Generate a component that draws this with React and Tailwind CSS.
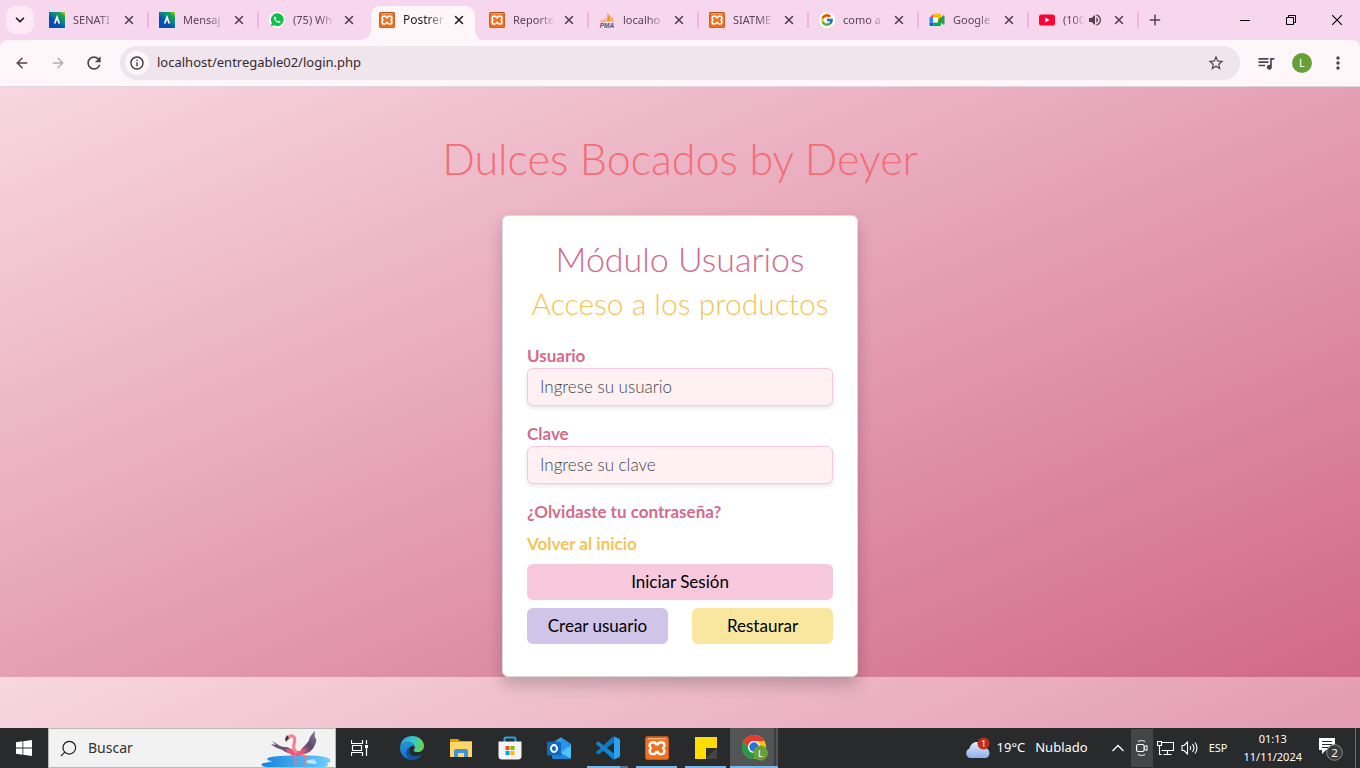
import React from "react";
import { X, Plus, ArrowLeft, ArrowRight, ChevronDown, Search } from "lucide-react";
import { FcGoogle } from "react-icons/fc";
import { MdQueueMusic, MdMoreVert, MdRefresh, MdStarOutline, MdInfoOutline, MdVolumeUp } from "react-icons/md";

function SenatiIcon() {
  return (
    <svg viewBox="0 0 16 16" className="size-4 shrink-0">
      <defs>
        <linearGradient id="senati" x1="1" y1="0" x2="0.15" y2="1">
          <stop offset="0" stopColor="#c5d92b" />
          <stop offset="0.2" stopColor="#1ba548" />
          <stop offset="0.5" stopColor="#0a7a94" />
          <stop offset="0.65" stopColor="#0350b5" />
        </linearGradient>
      </defs>
      <rect width="16" height="16" fill="url(#senati)" />
      <path d="M5.7 11.5 8 5.2l2.3 6.3" fill="none" stroke="#fff" strokeWidth="1.7" />
    </svg>
  );
}

function WhatsAppIcon() {
  return (
    <svg viewBox="0 0 16 16" className="size-4 shrink-0">
      <circle cx="8" cy="8" r="8" fill="#fff" />
      <path d="M1.8 14.3l1-3.4a6.4 6.4 0 1 1 2.5 2.4z" fill="#0fbf45" />
      <path d="M5.7 4.6c-1.3.9-.7 2.5.4 4 1.2 1.5 3 3 4.6 2.3 1-.5 1-1.2.9-1.500l-1.600-.8-.9 1c-1.200-.4-2.100-1.400-2.600-2.300l.6-.9-.7-1.700z" fill="#fff" />
    </svg>
  );
}

function XamppIcon({ className }) {
  return (
    <svg viewBox="0 0 24 24" className={className}>
      <rect x="0" y="0" width="24" height="24" rx="2.5" fill="#b9541a" />
      <rect x="0.8" y="1.6" width="22.4" height="21.6" rx="2" fill="#f0701d" />
      <path d="M3 2.7h18" stroke="#f7b98c" strokeWidth="1.2" />
      <path
        d="M8.2 6.2c-2.2 0-3.600 1.300-3.600 3 0 1.200.5 2.100 1.300 2.900-.8.800-1.300 1.700-1.300 2.900 0 1.800 1.400 3.100 3.500 3.100 1.700 0 2.700-.8 3-2.200h1.800c.3 1.400 1.300 2.200 3 2.200 2.100 0 3.500-1.300 3.500-3.100 0-1.200-.5-2.100-1.300-2.900.8-.8 1.300-1.700 1.300-2.900 0-1.700-1.400-3-3.600-3-1.600 0-2.600.8-2.900 2.200h-1.800c-.3-1.400-1.300-2.200-2.900-2.200z"
        fill="none" stroke="#fff" strokeWidth="2.4" strokeLinejoin="round"
      />
    </svg>
  );
}

function PmaIcon() {
  return (
    <svg viewBox="0 0 16 16" className="size-4 shrink-0">
      <path d="M8 1c3 2 4 5 3.500 8.500H7.200C8.600 7 8.800 4 8 1z" fill="#f89c0e" />
      <path d="M11.300 3.500c2 1.500 3.500 3.500 3.700 6h-3c.3-2 0-4-.7-6z" fill="#f9b04a" />
      <path d="M7 3.500C7 6 5.500 8.500 2.500 10H6c1-2 1.400-4 1-6.500zM3.400 6C3 8 2 9.300.6 10.200h1.800C3.300 9 3.600 7.500 3.400 6z" fill="#f3a83c" />
      <text x="8" y="15.6" textAnchor="middle" fontSize="6.5" fontWeight="900" fontStyle="italic" fill="#4c5579" fontFamily="Liberation Sans, sans-serif">PMA</text>
    </svg>
  );
}

function GoogleIcon() {
  return (
    <span className="flex size-4 shrink-0 items-center justify-center rounded-full bg-white">
      <FcGoogle className="size-3.5" />
    </span>
  );
}

function MeetIcon() {
  return (
    <svg viewBox="0 0 16 16" className="size-4 shrink-0">
      <path d="M4.2 2 .5 5.700h3.700z" fill="#ea4335" />
      <path d="M.5 5.700h3.700v4.700H.5z" fill="#2684fc" />
      <path d="M.5 10.400h3.700V14H1.700c-.7 0-1.200-.5-1.200-1.200z" fill="#0066da" />
      <path d="M4.200 2h6.600c.7 0 1.200.5 1.200 1.200V8l-3-.5V5.700H4.200z" fill="#ffba00" />
      <path d="M4.200 14v-3.600H9V8l3-2.500v7.300c0 .7-.5 1.200-1.200 1.200z" fill="#00ac47" />
      <path d="M4.200 5.700H9v4.700H4.200z" fill="#fff" />
      <path d="M9 8l5.500-4.700c.4-.3 1-.1 1 .4v8.600c0 .5-.6.7-1 .4z" fill="#2f9a48" />
    </svg>
  );
}

function YouTubeIcon() {
  return (
    <svg viewBox="0 0 16 16" className="size-4 shrink-0">
      <rect y="2.5" width="16" height="11" rx="2.6" fill="#ff0033" />
      <path d="M6.300 5.600v4.800L10.500 8z" fill="#fff" />
    </svg>
  );
}

const tabs = [
  { title: "SENATI", icon: <SenatiIcon /> },
  { title: "Mensaj", icon: <SenatiIcon /> },
  { title: "(75) Wh", icon: <WhatsAppIcon /> },
  { title: "Postrerí", icon: <XamppIcon className="size-4 shrink-0" />, active: true },
  { title: "Reporte", icon: <XamppIcon className="size-4 shrink-0" /> },
  { title: "localho", icon: <PmaIcon /> },
  { title: "SIATME", icon: <XamppIcon className="size-4 shrink-0" /> },
  { title: "como a", icon: <GoogleIcon /> },
  { title: "Google", icon: <MeetIcon /> },
  { title: "(100", icon: <YouTubeIcon />, audio: true },
];

function Tab({ tab, separator }) {
  return (
    <div
      className={
        tab.active
          ? "relative z-10 flex h-[34px] w-[110px] items-center self-end pb-1.5"
          : "relative flex h-[34px] w-[110px] items-center self-end pb-1.5"
      }
    >
      {tab.active && (
        <svg viewBox="0 0 124 34" className="absolute -left-2.5 top-0 h-[34px] w-[124px]" aria-hidden="true">
          <path d="M0 34c7 0 12-4 12-11V10C12 4 16 0 22 0h84c6 0 10 4 10 10v13c0 7 4 11 8 11z" fill="#fff6fa" />
        </svg>
      )}
      <div className="relative flex w-full items-center pl-2.5">
        {tab.icon}
        <span
          className={
            tab.audio
              ? "ml-2 w-6 whitespace-nowrap text-[11px] text-[#5a4355] [mask-image:linear-gradient(to_right,black_40%,transparent_90%)]"
              : tab.active
                ? "ml-2 w-[42px] whitespace-nowrap text-[12px] text-[#231c21] [mask-image:linear-gradient(to_right,black_60%,transparent)]"
                : "ml-2 w-[42px] whitespace-nowrap text-[11px] text-[#5a4355] [mask-image:linear-gradient(to_right,black_60%,transparent)]"
          }
        >
          {tab.title}
        </span>
        {tab.audio && <MdVolumeUp className="size-4 text-[#54404f]" />}
        <button
          aria-label={"Cerrar " + tab.title}
          className={tab.active ? "ml-auto mr-[13px] text-[#231c21]" : "ml-auto mr-[13px] text-[#54404f]"}
        >
          <X className="size-3.5" strokeWidth={2.6} />
        </button>
      </div>
      {separator && <span className="absolute bottom-3 right-0 h-4 w-0.5 bg-[#f3b2e8]" />}
    </div>
  );
}

function Browser() {
  return (
    <header className="bg-[#f6d7ee]">
      <div className="flex h-10 items-center">
        <button aria-label="Buscar pestañas" className="ml-1.5 flex size-7 items-center justify-center rounded-[10px] bg-[#fdeaf6] text-[#231c21]">
          <ChevronDown className="size-3.5" strokeWidth={3} />
        </button>
        <div className="ml-1 flex h-10 pl-px">
          {tabs.map((t, i) => (
            <Tab key={i} tab={t} separator={i !== 2 && i !== 3} />
          ))}
        </div>
        <button aria-label="Nueva pestaña" className="ml-2 text-[#54404f]">
          <Plus className="size-4" strokeWidth={2.2} />
        </button>
        <div className="ml-auto flex items-center text-black">
          <button aria-label="Minimizar" className="flex h-10 w-[46px] items-center justify-center">
            <svg viewBox="0 0 10 10" className="size-2.5"><path d="M0 5.500h10" stroke="currentColor" /></svg>
          </button>
          <button aria-label="Restaurar ventana" className="flex h-10 w-[46px] items-center justify-center">
            <svg viewBox="0 0 10 10" className="size-2.5"><path d="M.5 2.500h7v7h-7zM2.500 2.500v-2h7v7h-2" fill="none" stroke="currentColor" /></svg>
          </button>
          <button aria-label="Cerrar ventana" className="flex h-10 w-[46px] items-center justify-center">
            <svg viewBox="0 0 10 10" className="size-2.5"><path d="M0 0l10 10M10 0L0 10" stroke="currentColor" strokeWidth="1.100" /></svg>
          </button>
        </div>
      </div>
      <div className="flex h-[47px] items-center rounded-t-lg border-b border-[#e2d5dd] bg-[#fff6fa] pl-3.5 pr-3 text-[#54404f]">
        <button aria-label="Atrás"><ArrowLeft className="size-4" strokeWidth={2.2} /></button>
        <button aria-label="Adelante" className="ml-5 text-[#b8abb4]"><ArrowRight className="size-4" strokeWidth={2.2} /></button>
        <button aria-label="Recargar" className="ml-[18px]"><MdRefresh className="size-5" /></button>
        <div className="ml-4 flex h-[34px] flex-1 items-center rounded-full bg-[#f0e4ed] pl-[5px] pr-[15px]">
          <button aria-label="Información del sitio" className="flex size-6 shrink-0 items-center justify-center rounded-full bg-[#fff6fa] text-[#3a3037]">
            <MdInfoOutline className="size-4" />
          </button>
          <input
            aria-label="Dirección"
            defaultValue="localhost/entregable02/login.php"
            className="ml-2 min-w-0 flex-1 bg-transparent text-[13px] text-[#33292f] outline-none"
          />
          <button aria-label="Marcar página"><MdStarOutline className="size-[18px]" /></button>
        </div>
        <button aria-label="Cola multimedia" className="ml-4"><MdQueueMusic className="size-5" /></button>
        <button aria-label="Perfil" className="ml-4 flex size-5 items-center justify-center rounded-full bg-[#689f38] text-[11px] text-white">L</button>
        <button aria-label="Menú" className="ml-4"><MdMoreVert className="size-5" /></button>
      </div>
    </header>
  );
}

function Field({ id, label, type, placeholder }) {
  return (
    <div className="mb-4">
      <label htmlFor={id} className="block font-bold leading-6 text-[#d36b8c]">{label}</label>
      <input
        id={id}
        type={type}
        placeholder={placeholder}
        className="block h-[38px] w-full rounded-md border border-[#f8c8dc] bg-[#fff0f3] px-3 pb-0.5 font-light text-gray-700 shadow-[0_2px_4px_rgba(0,0,0,0.1)] outline-none placeholder:text-[#41464b]"
      />
    </div>
  );
}

function Login() {
  return (
    <main className="flex-1 bg-[linear-gradient(to_bottom_right,#f8d7e0,#d16889)] bg-[length:100%_590px] pt-12 font-[Lato,'Noto_Sans',sans-serif] text-[17px]">
      <h1 className="mb-8 text-center text-[43px] font-light leading-[48px] text-[#f46d75]">Dulces Bocados by Deyer</h1>
      <form
        onSubmit={(e) => e.preventDefault()}
        className="mx-auto w-[356px] rounded-md border border-[#dcd9dd] bg-white px-6 pb-8 pt-6 shadow-[0_8px_16px_rgba(0,0,0,0.2)]"
      >
        <h2 className="mb-2 text-center text-[34px] font-light leading-[38px] text-[#d36b8c]">Módulo Usuarios</h2>
        <h3 className="mb-6 whitespace-nowrap text-center text-[30px] font-light leading-[34px] text-[#f2c45a]">Acceso a los productos</h3>
        <Field id="usuario" label="Usuario" type="text" placeholder="Ingrese su usuario" />
        <Field id="clave" label="Clave" type="password" placeholder="Ingrese su clave" />
        <a href="#recuperar" className="mb-2 block font-bold leading-6 text-[#d36b8c]">¿Olvidaste tu contraseña?</a>
        <a href="#inicio" className="mb-2 block font-bold leading-6 text-[#f2c45a]">Volver al inicio</a>
        <button type="submit" className="mb-2 h-9 w-full rounded-md bg-[#f8c8dc] text-black">Iniciar Sesión</button>
        <div className="grid grid-cols-2 gap-6">
          <button type="button" className="h-9 rounded-md bg-[#d0c4e8] text-black">Crear usuario</button>
          <button type="reset" className="h-9 rounded-md bg-[#f9e79f] text-black">Restaurar</button>
        </div>
      </form>
    </main>
  );
}

function Flamingo() {
  return (
    <svg viewBox="0 0 70 38" className="mr-1 h-[38px] w-[70px] shrink-0" aria-hidden="true">
      <defs>
        <linearGradient id="water" x1="0" x2="1"><stop offset="0" stopColor="#1583dc" /><stop offset="1" stopColor="#72cdff" /></linearGradient>
        <linearGradient id="wing" x1="0" y1="1" x2="1" y2="0"><stop offset="0" stopColor="#e85a7d" /><stop offset="0.5" stopColor="#5b4a70" /><stop offset="1" stopColor="#8b7b97" /></linearGradient>
      </defs>
      <path d="M7 29c8-3 50-4 60 0 4 2 3 4-1 5 3 3-2 4-5 4H6c-6 0-7-3-3-4 3-1 8-1 8-2-4 0-6-2-4-3z" fill="url(#water)" />
      <path d="M45 34c0-3 3-4 5-3 1-2 4-1 4 1 2 0 2 3 0 3z" fill="#b6e6ff" />
      <path d="M38 25c2-7 8-9 10-14 1-4 3-6 6-9 0 3-1 5 1 8 1 3-1 5-2 8-3 5-8 8-15 7z" fill="url(#wing)" />
      <path d="M32 24c-7 1-9-3-13-4-3-1-6-2-9-5l5 1-4-4c4 2 8 6 12 6 5 0 8 2 11 5z" fill="#66527a" />
      <path d="M24 20c7 0 10 2 16 2 2-1 4-2 5-2-1 4-5 7-9 7-6 0-9-3-12-7z" fill="#f0567b" />
      <path d="M35 23c-6-5 1-10-2-15-2-2-5-1-6 1" fill="none" stroke="#fb8290" strokeWidth="3.2" strokeLinecap="round" />
      <path d="M26 6l-2 4 1 3 3-4z" fill="#49304b" />
      <path d="M34 26l1 11M40 25l5 3-1 8" fill="none" stroke="#f2766f" strokeWidth="1.7" />
    </svg>
  );
}

const EdgeIcon = () => (
  <svg viewBox="0 0 24 24" className="size-6">
    <defs>
      <linearGradient id="edgeTop" x1="0" y1="0.3" x2="1" y2="0.5"><stop offset="0" stopColor="#2aa5e0" /><stop offset="0.5" stopColor="#33c5cf" /><stop offset="1" stopColor="#66d94b" /></linearGradient>
      <linearGradient id="edgeLow" x1="0" y1="0" x2="0.4" y2="1"><stop offset="0" stopColor="#229be0" /><stop offset="1" stopColor="#1267bd" /></linearGradient>
    </defs>
    <path d="M0.2 10.5C1 4 6 0 12 0c7 0 12 4.700 12 10 0 4-3.300 6-6.300 6-2.700 0-4.200-.9-4.200-1.600 0-.5 1.300-1 1.300-2.900C14.800 8 11 6.200 7.500 6.200c-3.500 0-6 1.700-7.300 4.300z" fill="url(#edgeTop)" />
    <path d="M0.1 11C1 8 4 6.200 7.500 6.200c3.300 0 6.200 1.500 7 4C10.500 9 8.500 12 8.500 14.500c0 3.500 3 6 7 6 3 0 5-1 6.500-2.200C20 22 16.300 24 12 24 5 24-.5 18 .1 11z" fill="url(#edgeLow)" />
    <path d="M9.800 11.300c-1.200 1-1.600 2.300-1.300 4 .6 3.200 3.500 5.200 7 5.200 2.800 0 5-1 6.500-2.200C19.500 22.500 15 24 11.500 24 7.500 22.500 6 19 6.300 16c.2-2.300 1.500-4 3.500-4.700z" fill="#12519f" />
  </svg>
);

const FolderIcon = () => (
  <svg viewBox="0 0 22 18" className="h-[18px] w-[22px]">
    <path d="M0 0h8l2 2h12v5H0z" fill="#dfa000" />
    <path d="M0 3h22v15H0z" fill="#ffd667" />
    <path d="M4 18v-6.500L5.500 10h11l1.500 1.500V18h-4v-4H8v4z" fill="#3d94d8" />
  </svg>
);

const StoreIcon = () => (
  <svg viewBox="0 0 24 24" className="size-6">
    <path d="M6.500 6V3.200c0-1.200.5-1.700 1.700-1.700h7.600c1.200 0 1.700.5 1.700 1.700V6" fill="none" stroke="#2aa6de" strokeWidth="2" />
    <path d="M.5 5.500h23V20a3.500 3.500 0 0 1-3.500 3.500H4A3.500 3.500 0 0 1 .5 20z" fill="#f4f4f4" />
    <path d="M7.500 10h4v4h-4z" fill="#f25022" /><path d="M12.500 10h4v4h-4z" fill="#7fba00" />
    <path d="M7.500 15h4v4h-4z" fill="#00a4ef" /><path d="M12.500 15h4v4h-4z" fill="#ffb900" />
  </svg>
);

const OutlookIcon = () => (
  <svg viewBox="0 0 24 24" className="size-6">
    <path d="M5 8 14 1.500 24 8v13a2 2 0 0 1-2 2H7a2 2 0 0 1-2-2z" fill="#1472c4" />
    <path d="M8 5l6-3.500L21 6v9l-7 3-6-3z" fill="#35a7ee" />
    <path d="M14 1.500 24 8l-10 7z" fill="#2a93e4" />
    <path d="M24 8.500V21a2 2 0 0 1-2 2H8z" fill="#4cc2f5" />
    <path d="M5 12l18.500 10.500A2 2 0 0 1 22 23H7a2 2 0 0 1-2-2z" fill="#1b86d8" />
    <rect y="5.5" width="14" height="14" rx="1.5" fill="#0f6cbd" />
    <ellipse cx="7" cy="12.5" rx="3" ry="3.5" fill="none" stroke="#fff" strokeWidth="1.9" />
  </svg>
);

const CodeIcon = () => (
  <svg viewBox="0 0 24 24" className="size-6">
    <path d="M17.500.3 3.200 13.300.4 15.600c-.5.4-.5.9-.1 1.300l1.300 1.200c.4.400.8.400 1.300.1L18 6.500z" fill="#1378bd" />
    <path d="M17.500 23.700 3.200 10.700.4 8.400c-.5-.4-.5-.9-.1-1.300l1.300-1.200c.4-.4.800-.4 1.300-.1L18 17.500z" fill="#1185cf" />
    <path d="M17.500.3 23 2.800c.6.300 1 .8 1 1.500v15.400c0 .7-.4 1.200-1 1.500l-5.500 2.500c.4-.3.500-.8.500-1.300V1.600c0-.5-.1-1-.5-1.300z" fill="#2aa3f0" />
  </svg>
);

const NotesIcon = () => (
  <svg viewBox="0 0 22 22" className="size-[22px]">
    <path d="M0 0h22v11L11 22H0z" fill="#ffdd00" />
    <path d="M22 11v11H11z" fill="#4a4a4a" />
    <path d="M11 11h11L11 22z" fill="#2f2f2f" />
    <path d="M11 22l11-11v11z" fill="#444" />
  </svg>
);

const ChromeIcon = () => (
  <svg viewBox="0 0 26 26" className="size-[26px]">
    <circle cx="12" cy="12" r="12" fill="#fbc116" />
    <path d="M1.600 6A12 12 0 0 1 22.400 6H12a6 6 0 0 0-5.200 9z" fill="#e33b2e" />
    <path d="M1.600 6A12 12 0 0 0 12 24l5.200-9a6 6 0 0 1-10.400 0z" fill="#229a4c" />
    <circle cx="12" cy="12" r="6" fill="#fff" />
    <circle cx="12" cy="12" r="4.7" fill="#2a6fe6" />
    <circle cx="18.5" cy="18" r="7.500" fill="#689f38" />
    <text x="18.5" y="21.5" textAnchor="middle" fontSize="9.5" fill="#fff" fontFamily="Noto Sans, sans-serif">L</text>
  </svg>
);

const apps = [
  { name: "Edge", icon: <EdgeIcon /> },
  { name: "Explorador", icon: <FolderIcon /> },
  { name: "Store", icon: <StoreIcon /> },
  { name: "Outlook", icon: <OutlookIcon /> },
  { name: "Visual Studio Code", icon: <CodeIcon />, open: true, multi: true },
  { name: "XAMPP", icon: <XamppIcon className="size-6" />, open: true },
  { name: "Notas rápidas", icon: <NotesIcon />, open: true },
];

function Taskbar() {
  return (
    <footer className="flex h-10 bg-[#292a2b] text-white">
      <button aria-label="Inicio" className="flex w-12 items-center justify-center">
        <svg viewBox="0 0 16 16" className="size-4"><path d="M0 2.200 6.500 1.300v6.300H0zM7.300 1.200 16 0v7.600H7.300zM0 8.400h6.500v6.300L0 13.800zM7.300 8.400H16V16l-8.700-1.200z" fill="#fff" /></svg>
      </button>
      <label className="flex w-[288px] items-center border border-[#b9b9b9] bg-[#f2f2f2] pl-2.5">
        <Search className="size-[19px] shrink-0 -scale-x-100 text-[#1c1c1c]" strokeWidth={1.5} />
        <input aria-label="Buscar" placeholder="Buscar" className="ml-2.5 min-w-0 flex-1 bg-transparent text-sm outline-none placeholder:text-[#303030]" />
        <Flamingo />
      </label>
      <button aria-label="Vista de tareas" className="flex w-[51px] items-center justify-center pr-1">
        <svg viewBox="0 0 17 16" className="h-4 w-[17px]"><path d="M.5 0v3.500h11V0M.5 16v-3.500h11V16M1.500 5.500h9v5h-9zM15.500 0v4M15.500 8v8" fill="none" stroke="#fff" strokeWidth="1.2" /><path d="M14 5h3v3h-3z" fill="#fff" /></svg>
      </button>
      {apps.map((a) => (
        <button key={a.name} aria-label={a.name} className="relative flex w-[49px] items-center justify-center">
          {a.icon}
          {a.open && <span className="absolute inset-x-1 bottom-0 h-0.5 bg-[#76b9ed]" />}
          {a.multi && <span className="absolute bottom-0 right-1 h-0.5 w-2 bg-[#54779a]" />}
        </button>
      ))}
      <button aria-label="Chrome" className="flex w-12 border-b-2 border-[#76b9ed] bg-[#3c3d3e]">
        <span className="flex h-full w-11 items-center justify-center bg-[#535455] pl-1.5 pt-0.5"><ChromeIcon /></span>
        <span className="ml-0.5 h-full w-0.5 bg-[#535455]" />
      </button>
      <div className="ml-auto flex items-center">
        <button className="flex items-center text-[13px]">
          <svg viewBox="0 0 26 22" className="mr-1.5 h-[22px] w-[26px]">
            <defs><linearGradient id="cloud" x1="0" y1="0" x2="0" y2="1"><stop offset="0" stopColor="#dfe9fb" /><stop offset="1" stopColor="#8db1ea" /></linearGradient></defs>
            <path d="M5 21a5 5 0 0 1-.5-9.500C5.500 7 9 4.500 12.500 5c3.500.300 5.500 3 6 5.500 3.500 0 6 2.500 6 5.500s-2 5-5 5z" fill="url(#cloud)" />
            <circle cx="18.5" cy="6.500" r="6" fill="#c42b1c" />
            <text x="18.5" y="10" textAnchor="middle" fontSize="9" fill="#fff" fontFamily="Noto Sans, sans-serif">1</text>
          </svg>
          <span>19°C</span>
          <span className="ml-2.5">Nublado</span>
        </button>
        <button aria-label="Mostrar iconos ocultos" className="ml-6">
          <svg viewBox="0 0 12 8" className="h-2 w-3"><path d="M.5 7 6 1.500 11.500 7" fill="none" stroke="#fff" strokeWidth="1.3" /></svg>
        </button>
        <button aria-label="Cámara en uso" className="ml-[7px] flex h-[38px] w-[22px] items-center justify-center bg-[#444546]">
          <svg viewBox="0 0 12 16" className="h-4 w-3"><path d="M2 1.500C4 .3 7 .3 9 1.500M2 14.500c2 1.200 5 1.200 7 0" fill="none" stroke="#fff" /><rect x=".6" y="4.5" width="7.5" height="7" rx="1.500" fill="none" stroke="#fff" strokeWidth="1.2" /><path d="M8 7l3-1.500v5L8 9" fill="none" stroke="#fff" /></svg>
        </button>
        <button aria-label="Red" className="ml-1">
          <svg viewBox="0 0 17 16" className="h-4 w-[17px]"><path d="M5 2.500h11.500v8H4.500M10.500 11v3M6.500 14.500h8M.5 1.500h4v4h-4zM2.500 5.500v9h2" fill="none" stroke="#fff" strokeWidth="1.1" /></svg>
        </button>
        <button aria-label="Volumen" className="ml-[7px]">
          <svg viewBox="0 0 18 16" className="h-4 w-[18px]"><path d="M1 5.500h2L6.500 2v12L3 10.500H1z" fill="none" stroke="#fff" strokeWidth="1.1" /><path d="M9 6c.9 1.200.9 2.800 0 4M11.500 4.200c1.700 2.200 1.700 5.400 0 7.600M14 2.500c2.600 3.200 2.600 7.800 0 11" fill="none" stroke="#fff" strokeWidth="1.1" /></svg>
        </button>
        <span className="ml-2.5 text-[11px]">ESP</span>
        <div className="ml-4 flex flex-col text-center text-[11px] leading-[18px]">
          <span>01:13</span>
          <span>11/11/2024</span>
        </div>
        <button aria-label="Notificaciones" className="ml-4 mr-3">
          <svg viewBox="0 0 25 25" className="size-[25px]">
            <path d="M1 2h16v12H8l-4 4v-4H1z" fill="#fff" /><path d="M4 5.500h10M4 8.500h10M4 11.500h6" stroke="#292a2b" strokeWidth="1.1" />
            <circle cx="16.5" cy="16.5" r="7.800" fill="#3a3b3c" stroke="#8b8c8d" />
            <text x="16.5" y="20.7" textAnchor="middle" fontSize="11.5" fill="#fff" fontFamily="Noto Sans, sans-serif">2</text>
          </svg>
        </button>
        <span className="mr-1 h-10 w-px bg-[#6d6e6f]" />
      </div>
    </footer>
  );
}

export default function App() {
  return (
    <div className="flex min-h-screen flex-col font-['Noto_Sans','Open_Sans',sans-serif]">
      <Browser />
      <Login />
      <Taskbar />
    </div>
  );
}
